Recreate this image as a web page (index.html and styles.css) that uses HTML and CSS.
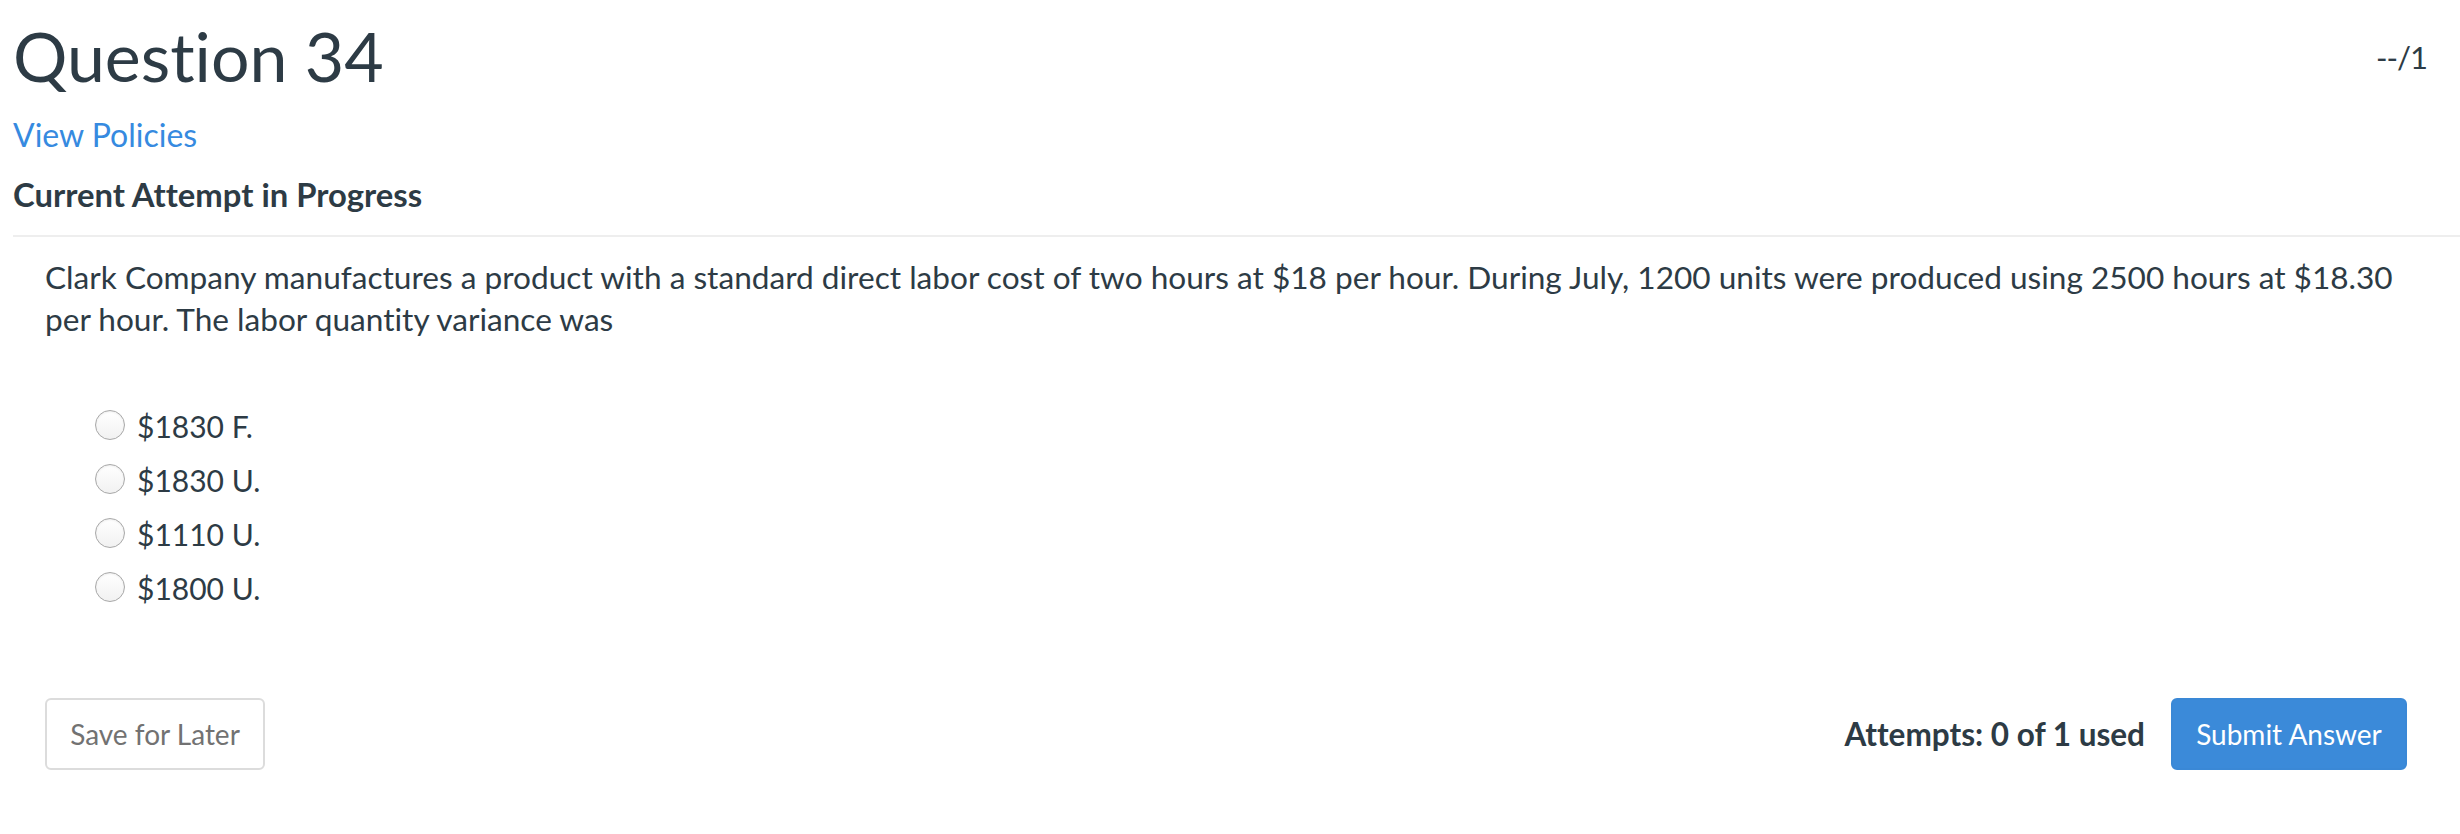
FILE: index.html
```html
<!DOCTYPE html>
<html lang="en">
<head>
<meta charset="utf-8">
<title>Question 34</title>
<link rel="stylesheet" href="styles.css">
</head>
<body>
<div class="page">
  <div class="header">
    <h1 class="title">Question 34</h1>
    <div class="score">--/1</div>
  </div>
  <a class="policies" href="#">View Policies</a>
  <div class="status">Current Attempt in Progress</div>
  <div class="divider"></div>
  <div class="question">
    <p class="prompt">Clark Company manufactures a product with a standard direct labor cost of two hours at $18 per hour. During July, 1200 units were produced using 2500 hours at $18.30 per hour. The labor quantity variance was</p>
    <ul class="options">
      <li class="option"><span class="radio"></span><span class="label">$1830 F.</span></li>
      <li class="option"><span class="radio"></span><span class="label">$1830 U.</span></li>
      <li class="option"><span class="radio"></span><span class="label">$1110 U.</span></li>
      <li class="option"><span class="radio"></span><span class="label">$1800 U.</span></li>
    </ul>
    <div class="footer">
      <button class="btn btn-save" type="button">Save for Later</button>
      <div class="submit-group">
        <span class="attempts">Attempts: 0 of 1 used</span>
        <button class="btn btn-submit" type="button">Submit Answer</button>
      </div>
    </div>
  </div>
</div>
</body>
</html>
```

FILE: styles.css
```css
html, body {
  margin: 0;
  padding: 0;
  background: #ffffff;
}

body {
  font-family: Lato, "Noto Sans", sans-serif;
  color: #2d3b45;
  font-variant-ligatures: none;
  font-feature-settings: "liga" 0, "clig" 0;
}

.page {
  padding-left: 13px;
}

.header {
  display: flex;
  justify-content: space-between;
  align-items: flex-start;
  padding-right: 33px;
}

.title {
  margin: 15px 0 0 0;
  font-size: 68px;
  font-weight: 400;
  line-height: 1.2;
}

.score {
  margin-top: 39px;
  font-size: 31px;
  line-height: 1.2;
  letter-spacing: -1px;
}

.policies {
  display: block;
  width: max-content;
  margin-top: 19px;
  font-size: 32px;
  line-height: 1.2;
  color: #368ae0;
  text-decoration: none;
}

.status {
  margin-top: 22px;
  font-size: 32.8px;
  font-weight: 700;
  line-height: 38px;
}

.divider {
  margin-top: 21px;
  height: 2px;
  background: #eeeeee;
}

.question {
  padding: 0 33px 0 32px;
}

.prompt {
  margin: 19px 0 0 0;
  font-size: 31.6px;
  line-height: 42px;
}

.options {
  list-style: none;
  margin: 59px 0 0 0;
  padding: 0 0 0 50px;
}

.option {
  display: flex;
  align-items: center;
  height: 54px;
  font-size: 30px;
}

.radio {
  box-sizing: border-box;
  width: 30px;
  height: 30px;
  border-radius: 50%;
  border: 1.5px solid #a8a8a8;
  background: linear-gradient(#ffffff, #f1f1f1);
  box-shadow: inset 0 1px 2px rgba(0, 0, 0, 0.08);
  margin-right: 12px;
  margin-top: -2px;
}

.footer {
  display: flex;
  justify-content: space-between;
  align-items: center;
  margin-top: 83px;
  padding-right: 20px;
}

.submit-group {
  display: flex;
  align-items: center;
  gap: 26px;
}

.attempts {
  font-size: 31.5px;
  font-weight: 700;
}

.btn {
  box-sizing: border-box;
  height: 72px;
  font-family: Lato, "Noto Sans", sans-serif;
  font-size: 28px;
  border-radius: 6px;
  cursor: pointer;
  font-variant-ligatures: none;
}

.btn-save {
  width: 220px;
  background: #ffffff;
  border: 2px solid #dcdcdc;
  color: #727272;
}

.btn-submit {
  width: 236px;
  background: #3b8ad9;
  border: 2px solid #3a88d6;
  color: #ffffff;
}
```
